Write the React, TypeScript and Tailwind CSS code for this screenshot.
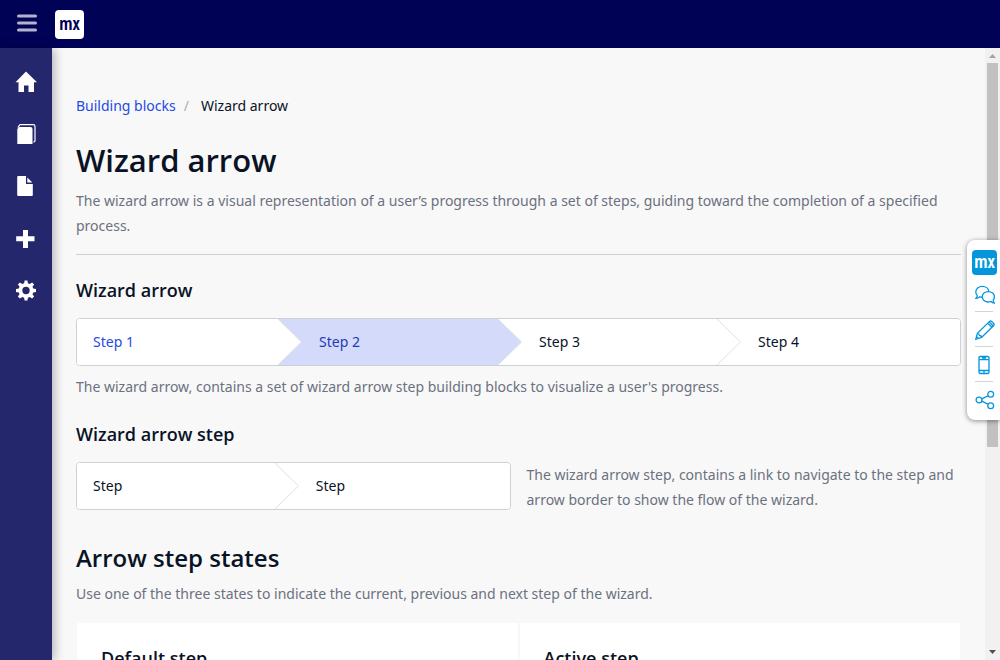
import type { ReactNode } from "react";

function Logo({ className }: { className: string }) {
  return (
    <span
      className={`flex items-center justify-center rounded font-['Open_Sans_Condensed','Roboto_Condensed',Roboto,sans-serif] text-[17px] font-black leading-none ${className}`}
    >
      <span className="pb-0.5">mx</span>
    </span>
  );
}

const navItems: { label: string; icon: ReactNode }[] = [
  {
    label: "Home",
    icon: <path d="M11 0.5 L22 11.3 H19 V21 H13.5 V14.5 H9 V21 H3.5 V11.3 H0.5 Z" />,
  },
  {
    label: "Page templates",
    icon: (
      <>
        <path d="M4 4 H15.5 Q17.5 4 17.5 6 V21 H2.3 V6 Z" />
        <path d="M2.8 4.5 L5 1.7 H18.2 Q20 1.7 20 3.5 V18 L18.5 19.4" fill="none" stroke="currentColor" strokeWidth="1.2" />
      </>
    ),
  },
  {
    label: "Building blocks",
    icon: (
      <>
        <path d="M3.2 1 H11 V9 H17.8 V20 Q17.8 21 16.8 21 H3.2 Q2.2 21 2.2 20 V2 Q2.2 1 3.2 1 Z" />
        <path d="M12.3 2.5 L17.3 7.6 H12.3 Z" />
      </>
    ),
  },
  {
    label: "Widgets",
    icon: <path d="M8 3 H13 V9.3 H19.5 V14.2 H13 V21 H8 V14.2 H1.2 V9.3 H8 Z" />,
  },
  {
    label: "Settings",
    icon: (
      <path
        fillRule="evenodd"
        d="M9.6 1.5 H12.4 L12.9 4.3 L14.8 5.1 L17.1 3.4 L19.1 5.4 L17.5 7.7 L18.2 9.6 L21 10.1 V12.9 L18.2 13.4 L17.5 15.3 L19.1 17.6 L17.1 19.6 L14.8 17.9 L12.9 18.7 L12.4 21.5 H9.6 L9.1 18.7 L7.2 17.9 L4.9 19.6 L2.9 17.6 L4.5 15.3 L3.8 13.4 L1 12.9 V10.1 L3.8 9.6 L4.5 7.7 L2.9 5.4 L4.9 3.4 L7.2 5.1 L9.1 4.3 Z M11 7.8 A3.7 3.7 0 1 0 11 15.2 A3.7 3.7 0 1 0 11 7.8 Z"
      />
    ),
  },
];

const tools: { label: string; icon: ReactNode }[] = [
  {
    label: "Feedback",
    icon: (
      <>
        <path d="M7.2 12.2 Q5.3 12.2 4.5 11.8 Q3.4 13.2 1 13.3 Q2.2 12 2.2 10.4 Q.8 9 .8 6.9 C.8 3.7 3.6 1.4 7.2 1.4 C10.8 1.4 13.5 3.5 13.8 6.2" />
        <path d="M13.3 6.6 C10 6.6 7.2 8.8 7.2 11.8 C7.2 14.8 10 17 13.3 17 Q14.8 17 16 16.5 Q17.3 17.9 19.3 18 Q18.2 16.6 18.2 15.2 Q19.4 13.8 19.4 11.8 C19.4 8.8 16.7 6.6 13.3 6.6 Z" />
      </>
    ),
  },
  {
    label: "Edit",
    icon: (
      <path d="M.8 19.2 L2.4 13.4 L14.6 1.4 Q15.6 .6 16.6 1.4 L18.7 3.5 Q19.5 4.5 18.7 5.5 L6.6 17.5 Z M2.4 13.4 Q4 13.2 4.4 15.5 Q6.6 15.6 6.6 17.5 M12.8 3.2 L17 7.3 M14.2 1.9 L18.3 6 M1.5 16.7 L3.2 18.4" />
    ),
  },
  {
    label: "Preview on phone",
    icon: (
      <path d="M5.3 1.5 H12.7 Q14 1.5 14 2.8 V17.2 Q14 18.5 12.7 18.5 H5.3 Q4 18.5 4 17.2 V2.8 Q4 1.5 5.3 1.5 Z M4 4.6 H14 M4 15.5 H14 M7 3 H11 M9 15.5 V18.5" />
    ),
  },
  {
    label: "Share",
    icon: (
      <>
        <circle cx="4" cy="10" r="2.9" />
        <circle cx="15.7" cy="4.3" r="2.9" />
        <circle cx="15.7" cy="15.7" r="2.9" />
        <path d="M6.8 8.8 L12.8 5.8 M6.8 11.2 L12.8 14.2" />
      </>
    ),
  },
];

type StepState = "visited" | "active" | "default";

const textColor: Record<StepState, string> = {
  visited: "text-[#264ae5]",
  active: "text-[#1e3bb7]",
  default: "text-[#0a1325]",
};

const arrowFill: Record<StepState, string> = {
  visited: "fill-white",
  active: "fill-[#d4daf9]",
  default: "fill-white",
};

function Step({ label, state = "default", first, last }: { label: string; state?: StepState; first?: boolean; last?: boolean }) {
  return (
    <a
      href="#"
      className={`relative flex items-center ${first ? "pl-4" : "pl-[41px]"} ${state === "active" ? "bg-[#d4daf9]" : "bg-white"} ${textColor[state]}`}
    >
      {label}
      {!last && (
        <svg className="absolute top-0 left-full z-10 h-full w-6" viewBox="0 0 24 46" preserveAspectRatio="none" aria-hidden="true">
          <path d="M0 0 L23.5 23 L0 46 Z" className={arrowFill[state]} />
          <path d="M0 0 L23.5 23 L0 46" fill="none" stroke="#dfe0e3" />
        </svg>
      )}
    </a>
  );
}

function Wizard({ className, children }: { className: string; children: ReactNode }) {
  return (
    <div className={`grid h-12 overflow-hidden rounded border border-[#ced0d3] ${className}`}>{children}</div>
  );
}

const subheading = "font-['Open_Sans',sans-serif] text-lg leading-[22px] font-semibold";
const paragraph = "leading-[25px] text-[#6c7180]";

export default function App() {
  return (
    <div className="relative flex h-screen flex-col overflow-hidden bg-[#f8f8f8] font-['Noto_Sans',sans-serif] text-sm text-[#0a1325]">
      <header className="flex h-12 shrink-0 items-center gap-[15px] bg-[#000256] pl-4">
        <button aria-label="Toggle menu" className="flex size-6 items-center text-[#b3b3cc]">
          <svg viewBox="0 0 24 24" className="size-6" fill="none" stroke="currentColor" strokeWidth="3" strokeLinecap="round" aria-hidden="true">
            <path d="M2.5 4 H19.5 M2.5 11 H19.5 M2.5 18 H19.5" />
          </svg>
        </button>
        <a href="#" aria-label="Mendix home">
          <Logo className="size-[29px] bg-white text-[#000256]" />
        </a>
      </header>

      <div className="flex min-h-0 flex-1">
        <nav className="z-10 flex w-13 shrink-0 flex-col bg-[#24276c] pt-2 text-white shadow-[2px_0_10px_rgba(0,0,0,0.3)]">
          {navItems.map((item) => (
            <a key={item.label} href="#" aria-label={item.label} className="flex h-13 items-center pl-[15px]">
              <svg viewBox="0 0 22 22" className="size-[22px]" fill="currentColor" aria-hidden="true">
                {item.icon}
              </svg>
            </a>
          ))}
        </nav>

        <main className="min-w-0 flex-1 overflow-hidden px-6 pt-12">
          <nav aria-label="Breadcrumb" className="flex h-5 items-center">
            <a href="#" className="text-[#264ae5]">Building blocks</a>
            <span className="px-2 text-[#a9acb3]">/</span>
            <span className="pl-1">Wizard arrow</span>
          </nav>

          <h1 className="mt-6 font-['Open_Sans',sans-serif] text-[31px] leading-10 font-semibold">Wizard arrow</h1>
          <p className={`mt-2 ${paragraph}`}>
            The wizard arrow is a visual representation of a user’s progress through a set of steps, guiding toward the
            completion of a specified process.
          </p>
          <hr className="mt-4 border-[#ced0d3]" />

          <h3 className={`mt-6 ${subheading}`}>Wizard arrow</h3>
          <Wizard className="mt-[17px] grid-cols-[201fr_220fr_219fr_243fr]">
            <Step label="Step 1" state="visited" first />
            <Step label="Step 2" state="active" />
            <Step label="Step 3" />
            <Step label="Step 4" last />
          </Wizard>
          <p className={`mt-2 ${paragraph}`}>
            The wizard arrow, contains a set of wizard arrow step building blocks to visualize a user's progress.
          </p>

          <h3 className={`mt-6 ${subheading}`}>Wizard arrow step</h3>
          <div className="mt-[17px] grid grid-cols-2 gap-4">
            <Wizard className="grid-cols-[198fr_235fr]">
              <Step label="Step" first />
              <Step label="Step" last />
            </Wizard>
            <p className={paragraph}>
              The wizard arrow step, contains a link to navigate to the step and arrow border to show the flow of the
              wizard.
            </p>
          </div>

          <h2 className="mt-[31px] font-['Open_Sans',sans-serif] text-2xl leading-[30px] font-semibold">
            Arrow step states
          </h2>
          <p className={`mt-2 ${paragraph}`}>
            Use one of the three states to indicate the current, previous and next step of the wizard.
          </p>
          <div className="mt-[17px] grid grid-cols-2 gap-0.5 px-px">
            <section className="bg-white p-6">
              <h3 className={subheading}>Default step</h3>
            </section>
            <section className="bg-white p-6">
              <h3 className={subheading}>Active step</h3>
            </section>
          </div>
        </main>

        <div className="flex w-[15px] shrink-0 flex-col items-center bg-[#f1f1f1]" aria-hidden="true">
          <svg viewBox="0 0 15 15" className="size-[15px] shrink-0 fill-[#a3a3a3]">
            <path d="M4 10 L7.5 6 L11 10 Z" />
          </svg>
          <div className="flex min-h-0 w-[11px] flex-1 flex-col">
            <div className="h-[66%] bg-[#c1c1c1]" />
          </div>
          <svg viewBox="0 0 15 15" className="size-[15px] shrink-0 fill-[#505050]">
            <path d="M4 5 L11 5 L7.5 9 Z" />
          </svg>
        </div>
      </div>

      <aside className="absolute top-60 right-0 z-20 flex w-[33px] flex-col items-center rounded-l-lg bg-white pt-2.5 pb-[3px] pl-0.5 text-[#0595db] shadow-[0_1px_5px_rgba(0,0,0,0.45)]">
        <a href="#" aria-label="Mendix" className="mb-0.5">
          <Logo className="size-[25px] bg-[#0595db] text-white" />
        </a>
        {tools.map((tool) => (
          <button
            key={tool.label}
            aria-label={tool.label}
            className="group flex h-[35px] flex-col justify-center"
          >
            <span className="flex flex-1 items-center pt-0.5">
              <svg viewBox="0 0 20 20" className="size-5" fill="none" stroke="currentColor" strokeWidth="1.3" aria-hidden="true">
                {tool.icon}
              </svg>
            </span>
            <span className="h-px w-[18px] bg-[#d3d3d3] group-last:bg-white" />
          </button>
        ))}
      </aside>
    </div>
  );
}
